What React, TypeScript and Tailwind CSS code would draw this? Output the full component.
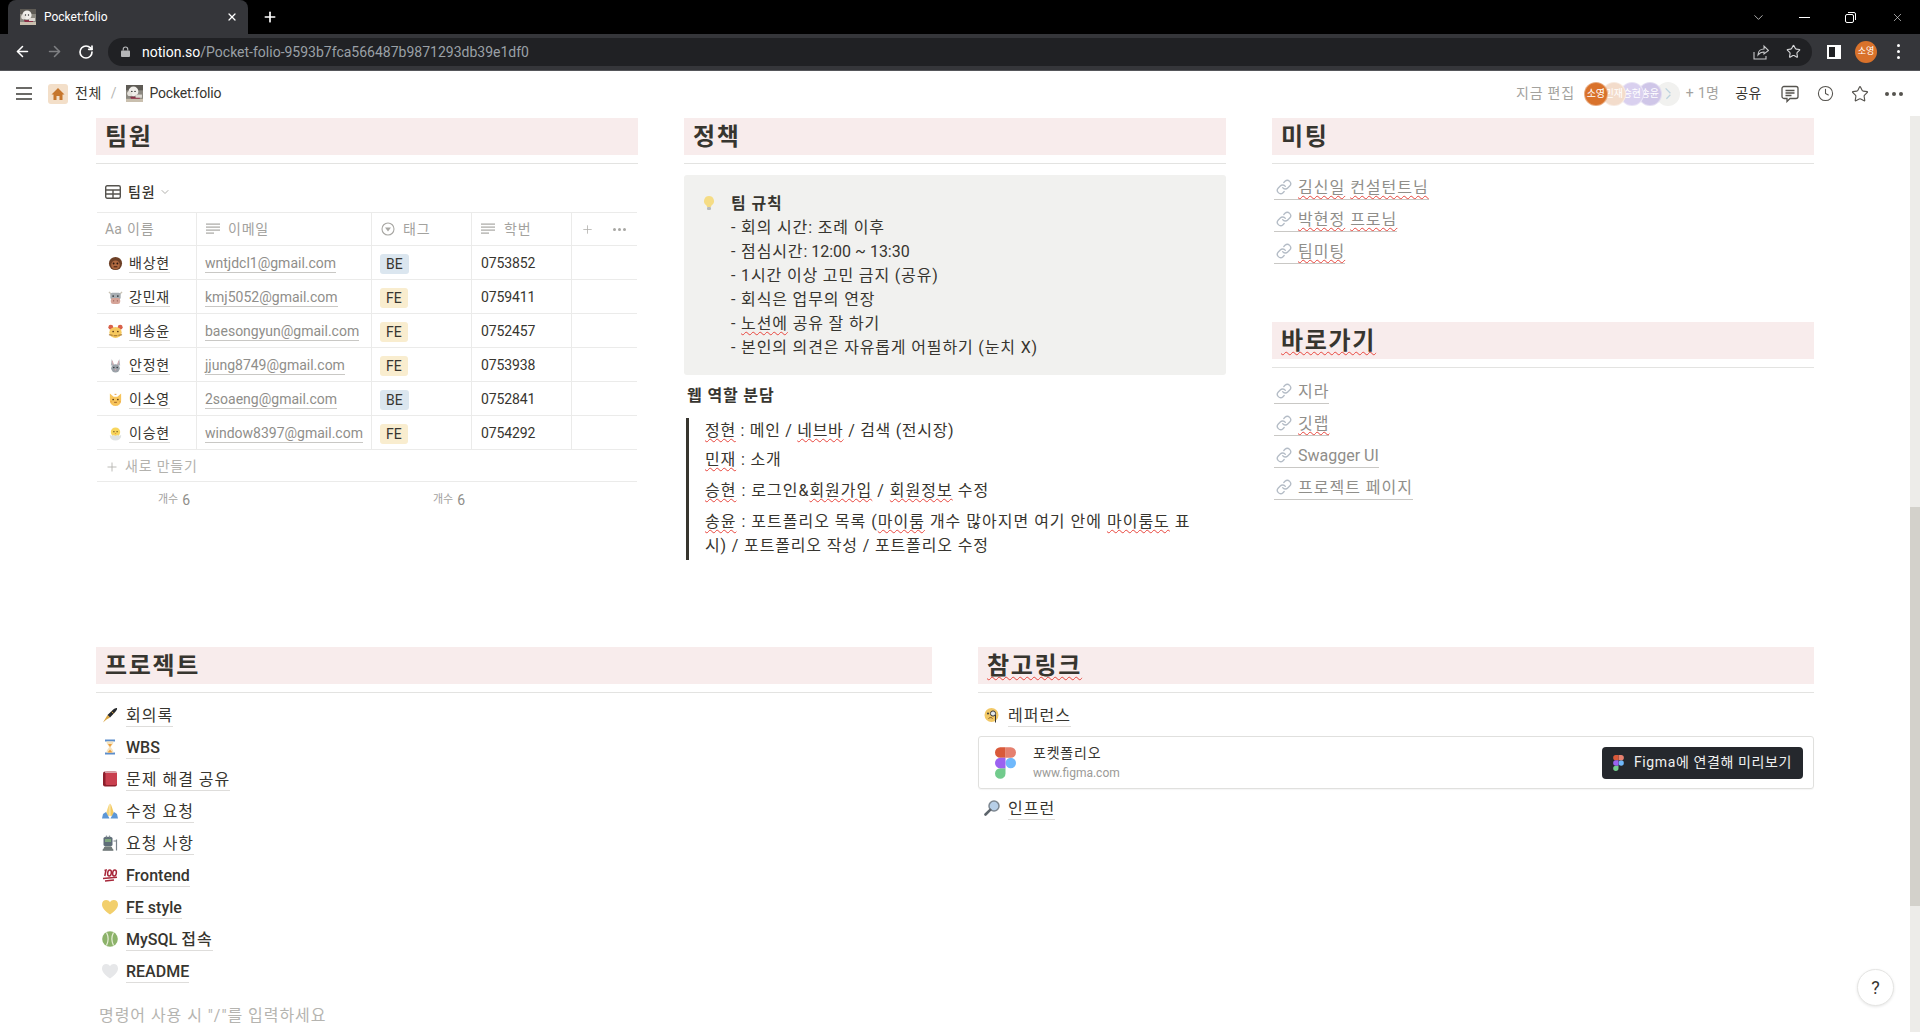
import React from "react";
import { ArrowLeft, ArrowRight, RotateCw, Star, Plus, X, ChevronDown, Link as LinkIcon, Clock } from "lucide-react";

type P = { className?: string };
const E = ({ children, className = "w-[16px] h-[16px]" }: { children: React.ReactNode; className?: string }) => (
  <svg viewBox="0 0 16 16" className={"shrink-0 " + className}>{children}</svg>
);

const Monkey = () => (
  <E className="w-[15px] h-[15px]">
    <circle cx="8" cy="8" r="7" fill="#6d4026" />
    <circle cx="8" cy="9.500" r="4.600" fill="#b0693f" />
    <circle cx="6" cy="8" r="1" fill="#2d1a10" /><circle cx="10" cy="8" r="1" fill="#2d1a10" />
    <path d="M6 11.500h4" stroke="#4a2515" strokeWidth="1.200" />
  </E>
);
const Cow = () => (
  <E className="w-[15px] h-[15px]">
    <path d="M1 2l3 3M15 2l-3 3" stroke="#c9c3b5" strokeWidth="1.500" />
    <rect x="2.500" y="3" width="11" height="7" rx="2" fill="#a7adb2" />
    <circle cx="5.500" cy="6.500" r=".9" fill="#33383c" /><circle cx="10.500" cy="6.500" r=".9" fill="#33383c" />
    <rect x="3" y="8.500" width="10" height="6.500" rx="2.600" fill="#d6a498" />
    <circle cx="6" cy="11.500" r=".7" fill="#8f5a50" /><circle cx="10" cy="11.500" r=".7" fill="#8f5a50" />
  </E>
);
const Hamster = () => (
  <E className="w-[15px] h-[15px]">
    <circle cx="3" cy="3.500" r="2.600" fill="#d9614a" /><circle cx="13" cy="3.500" r="2.600" fill="#d9614a" />
    <ellipse cx="8" cy="9" rx="6.600" ry="5.800" fill="#f6c95f" />
    <circle cx="5.500" cy="8" r=".9" fill="#5a3a15" /><circle cx="10.500" cy="8" r=".9" fill="#5a3a15" />
    <path d="M1 11.500l4 .5M15 11.500l-4 .5M6 12.500h4" stroke="#9a6a2a" strokeWidth="1" />
  </E>
);
const Rabbit = () => (
  <E className="w-[15px] h-[15px]">
    <path d="M4 1l2.500 7L3 8zM12 1L9.500 8 13 8z" fill="#aeb3b9" />
    <path d="M4.500 3l1.300 4.500M11.500 3l-1.300 4.500" stroke="#d9a7ad" strokeWidth="1" />
    <ellipse cx="8" cy="11" rx="4.600" ry="4.400" fill="#9aa1a8" />
    <circle cx="6.200" cy="10" r=".8" fill="#2f3338" /><circle cx="9.800" cy="10" r=".8" fill="#2f3338" />
    <circle cx="8" cy="12.500" r=".8" fill="#d9a7ad" />
  </E>
);
const Cat = () => (
  <E className="w-[15px] h-[15px]">
    <path d="M2 1.500L6 5h4l4-3.500V9A6 6 0 0 1 2 9z" fill="#f7c45b" />
    <circle cx="5.500" cy="8" r=".9" fill="#5a3a15" /><circle cx="10.500" cy="8" r=".9" fill="#5a3a15" />
    <path d="M6.500 11h3" stroke="#a5692a" strokeWidth="1.100" />
    <path d="M7 2.500h2M2.500 10.500h1.500M12 10.500h1.500" stroke="#e4983c" strokeWidth="1" />
  </E>
);
const Chick = () => (
  <E className="w-[15px] h-[15px]">
    <circle cx="8" cy="6.500" r="5" fill="#f8d65e" />
    <circle cx="6.300" cy="6" r=".7" fill="#5a4212" /><circle cx="9.700" cy="6" r=".7" fill="#5a4212" />
    <path d="M7 7.500h2l-1 1.200z" fill="#e8933a" />
    <path d="M2 9.500l2 1 2-1 2 1 2-1 2 1 2-1V11a6 4.500 0 0 1-12 0z" fill="#dfe3e3" />
  </E>
);
const Bulb = () => (
  <E>
    <path d="M8 1a5 5 0 0 0-3 9c.7.6 1 1.300 1 2h4c0-.7.3-1.400 1-2A5 5 0 0 0 8 1z" fill="#f5dc85" />
    <rect x="6" y="12" width="4" height="3" rx="1" fill="#b8bcbf" />
  </E>
);
const Pen = () => (
  <E>
    <path d="M15 1c.4 1.200-.5 2.700-2 4.200L8 10.500 5.500 8 11 2.800C12.400 1.500 14 .7 15 1z" fill="#26282b" />
    <path d="M5.500 8L8 10.500 4.500 12.500 1 15.500 3.400 11.500z" fill="#d9a441" />
    <path d="M9.700 4.600l2 2" stroke="#d9a441" strokeWidth="1" />
  </E>
);
const Hourglass = () => (
  <E>
    <rect x="3" y="0.500" width="10" height="2" fill="#5c8ecb" />
    <rect x="3" y="13.500" width="10" height="2" fill="#5c8ecb" />
    <path d="M4.500 2.500h7c0 3-2.500 4-2.500 5.500s2.500 2.500 2.500 5.500h-7C4.500 10.500 7 9.500 7 8S4.500 5.500 4.500 2.500z" fill="#f6e3bd" />
    <path d="M6 5h4L8 8zM5.500 13.500L8 10.500l2.500 3z" fill="#ee9f3d" />
  </E>
);
const Book = () => (
  <E>
    <rect x="1" y="0.500" width="14" height="15" rx="2" fill="#8d1f2c" />
    <rect x="3.500" y="0.500" width="11.500" height="13.500" rx="1.500" fill="#c93f4e" />
    <rect x="3" y="0.500" width="12" height="1.200" fill="#e2cfd1" />
  </E>
);
const Pray = () => (
  <E>
    <path d="M7.700 0.500C6.500 2 5.500 6 4.500 9 3.800 11 5 13 7.700 13z" fill="#f7d77e" />
    <path d="M8.300 0.500C9.500 2 10.500 6 11.500 9c.7 2-.5 4-3.200 4z" fill="#f2c95f" />
    <path d="M0 15.500L1 11 4 9l3.500 6.500zM16 15.500L15 11 12 9l-3.500 6.500z" fill="#5d97d6" />
  </E>
);
const Train = () => (
  <E>
    <rect x="1.500" y="2" width="9" height="9" rx="1.500" fill="#5f6d78" />
    <rect x="3" y="4" width="6" height="3" fill="#7fa77f" />
    <circle cx="4.500" cy="1.500" r=".9" fill="#8a939b" /><circle cx="7.500" cy="1.500" r=".9" fill="#8a939b" />
    <path d="M11.500 6h3v2.500M14.500 4.500v11" stroke="#7a838a" strokeWidth="1.200" fill="none" />
    <path d="M3 11L0 15.500h12L9 11z" fill="#9aa39e" />
    <path d="M2 13h8M1 15h10" stroke="#4a5257" strokeWidth="1" />
  </E>
);
const Hundred = () => (
  <E>
    <g stroke="#a7283a" fill="none" strokeWidth="1.500">
      <path d="M2.500 3.500L4 3 2.800 9" />
      <ellipse cx="7.500" cy="6" rx="1.800" ry="3" transform="rotate(10 7.500 6)" />
      <ellipse cx="12.500" cy="6" rx="1.800" ry="3" transform="rotate(10 12.500 6)" />
      <path d="M1 11.500l14-1.300M3 14l9-1" />
    </g>
  </E>
);
const Heart = ({ c }: { c: string }) => (
  <E>
    <path d="M8 15.500C3 12 0 9 0 5.200 0 2.600 2 1 4.200 1 5.800 1 7.200 1.900 8 3.200 8.800 1.900 10.200 1 11.800 1 14 1 16 2.600 16 5.200 16 9 13 12 8 15.500z" fill={c} />
  </E>
);
const Ball = () => (
  <E>
    <circle cx="8" cy="8" r="7.800" fill="#8cb26a" />
    <path d="M4.500 1.500c2 4 2 9 0 13M11.500 1.500c-2 4-2 9 0 13" stroke="#e9efd9" strokeWidth="1.200" fill="none" />
  </E>
);
const Monocle = () => (
  <E>
    <circle cx="7.500" cy="8" r="7" fill="#f2c866" />
    <circle cx="9" cy="6.500" r="2.600" fill="#e2e8ec" stroke="#3b3b3b" strokeWidth="1" />
    <circle cx="4" cy="6.500" r="1" fill="#3b3b3b" />
    <path d="M4.500 11.500c1.500-1.200 3-1.200 4 0" stroke="#7a4f1a" strokeWidth="1" fill="none" />
    <path d="M11.500 8v7.500" stroke="#333" strokeWidth="1" />
  </E>
);
const Magnifier = () => (
  <E>
    <circle cx="10" cy="6" r="5" fill="#b7cfe8" stroke="#7d8791" strokeWidth="1.500" />
    <path d="M6.200 9.800L1.500 14.500" stroke="#5c646b" strokeWidth="2.600" strokeLinecap="round" />
  </E>
);
const Dog = ({ className }: P) => (
  <svg viewBox="0 0 16 16" className={className}>
    <rect width="16" height="16" rx="1.500" fill="#8b8880" />
    <rect y="0" width="16" height="5" fill="#5e5b55" />
    <circle cx="7" cy="6" r="4.600" fill="#f0eeea" />
    <circle cx="3.500" cy="8" r="2.400" fill="#e4e1db" />
    <circle cx="5.500" cy="6" r=".7" fill="#222" /><circle cx="8.500" cy="6" r=".7" fill="#222" />
    <path d="M4 11h9v3H5z" fill="#8b2f46" />
    <path d="M0 13h16v3H0z" fill="#c9bfae" />
    <path d="M9 9h6v3H9z" fill="#dcd8d2" />
  </svg>
);
const Figma = ({ className }: P) => (
  <svg viewBox="0 0 38 57" className={className}>
    <path d="M19 28.500a9.500 9.500 0 1 1 19 0 9.500 9.500 0 0 1-19 0z" fill="#6fb8fb" />
    <path d="M0 47.500A9.500 9.500 0 0 1 9.500 38H19v9.500a9.500 9.500 0 1 1-19 0z" fill="#72cb8d" />
    <path d="M19 0v19h9.500a9.500 9.500 0 1 0 0-19H19z" fill="#e5806f" />
    <path d="M0 9.500A9.500 9.500 0 0 0 9.500 19H19V0H9.500A9.500 9.500 0 0 0 0 9.500z" fill="#d9593a" />
    <path d="M0 28.500A9.500 9.500 0 0 0 9.500 38H19V19H9.500A9.500 9.500 0 0 0 0 28.500z" fill="#9b62f0" />
  </svg>
);
const Lines = () => (
  <svg viewBox="0 0 14 14" className="w-[14px] h-[14px] shrink-0" fill="#a8a7a3">
    <rect x="0" y="1.500" width="14" height="1.200" /><rect x="0" y="4.500" width="14" height="1.200" />
    <rect x="0" y="7.500" width="14" height="1.200" /><rect x="0" y="10.500" width="8" height="1.200" />
  </svg>
);

const W = ({ children }: { children: React.ReactNode }) => (
  <span className="underline decoration-wavy decoration-[#e8453c] decoration-1 underline-offset-2 [text-decoration-skip-ink:none]">{children}</span>
);
const L = ({ children }: { children: React.ReactNode }) => <span className="tracking-normal">{children}</span>;

const Heading = ({ children }: { children: React.ReactNode }) => (
  <div>
    <div className="h-[37px] pt-[2px] bg-[#f8ecec] pl-[9px] flex items-center text-[24px] leading-[35px] font-bold text-[#37352f] tracking-[1.7px]">{children}</div>
    <div className="mt-[8px] h-px bg-[#e3e3e1]" />
  </div>
);

const members = [
  { icon: <Monkey />, name: "배상현", email: "wntjdcl1@gmail.com", tag: "BE", no: "0753852" },
  { icon: <Cow />, name: "강민재", email: "kmj5052@gmail.com", tag: "FE", no: "0759411" },
  { icon: <Hamster />, name: "배송윤", email: "baesongyun@gmail.com", tag: "FE", no: "0752457" },
  { icon: <Rabbit />, name: "안정현", email: "jjung8749@gmail.com", tag: "FE", no: "0753938" },
  { icon: <Cat />, name: "이소영", email: "2soaeng@gmail.com", tag: "BE", no: "0752841" },
  { icon: <Chick />, name: "이승현", email: "window8397@gmail.com", tag: "FE", no: "0754292" },
];

const Members = () => (
  <div className="ml-px w-[540px] text-[14px]">
    <div className="mt-[12px] h-[32px] flex items-center pl-[8px] text-[#37352f] font-medium">
      <svg viewBox="0 0 16 14" className="w-[16px] h-[14px]" fill="none" stroke="#55534e" strokeWidth="1.400">
        <rect x=".7" y=".7" width="14.600" height="12.600" rx="1.500" /><path d="M.7 5h14.600M.7 9h14.600M8 5v8.300" />
      </svg>
      <span className="ml-[7px] tracking-[0.8px]">팀원</span>
      <ChevronDown className="ml-[4px] w-[12px] h-[12px] text-[#b1b0ac]" />
    </div>
    <div className="mt-[4px] border-t border-[#ebebea] h-[34px] border-b grid grid-cols-[100px_175px_100px_100px_65px] text-[#a3a29e]">
      <div className="border-r border-[#ebebea] flex items-center pl-[8px]">
        <span className="text-[14px] w-[22px]">Aa</span><span className="tracking-[0.8px]">이름</span>
      </div>
      <div className="border-r border-[#ebebea] flex items-center pl-[9px]"><Lines /><span className="ml-[8px] tracking-[0.8px]">이메일</span></div>
      <div className="border-r border-[#ebebea] flex items-center pl-[9px]">
        <svg viewBox="0 0 14 14" className="w-[14px] h-[14px]" fill="none" stroke="#a8a7a3" strokeWidth="1.100"><circle cx="7" cy="7" r="6" /><path d="M4 5.500h6L7 9.500z" fill="#a8a7a3" stroke="none" /></svg>
        <span className="ml-[8px] tracking-[0.8px]">태그</span>
      </div>
      <div className="border-r border-[#ebebea] flex items-center pl-[9px]"><Lines /><span className="ml-[9px] tracking-[0.8px]">학번</span></div>
      <div className="flex items-center pl-[9px] text-[#b3b2ae]">
        <Plus className="w-[13px] h-[13px]" strokeWidth={1.500} />
        <span className="ml-[19px] flex gap-[2px]"><i className="w-[3px] h-[3px] rounded-full bg-[#a8a7a3]" /><i className="w-[3px] h-[3px] rounded-full bg-[#a8a7a3]" /><i className="w-[3px] h-[3px] rounded-full bg-[#a8a7a3]" /></span>
      </div>
    </div>
    {members.map((m) => (
      <div key={m.name} className="h-[34px] border-b border-[#ebebea] grid grid-cols-[100px_175px_100px_100px_65px] text-[#37352f]">
        <div className="border-r border-[#ebebea] flex items-center pl-[11px] pt-[2px]">
          {m.icon}
          <span className="ml-[6px] leading-[18px] border-b border-[#d9d8d5] tracking-[0.8px]">{m.name}</span>
        </div>
        <div className="border-r border-[#ebebea] flex items-center pl-[8px] pt-[2px] overflow-hidden">
          <span className="text-[#8f8e8a] leading-[18px] border-b border-[#c9c8c5] whitespace-nowrap">{m.email}</span>
        </div>
        <div className="border-r border-[#ebebea] flex items-center pl-[8px] pt-[2px]">
          <span className={m.tag === "BE" ? "h-[20px] px-[6px] rounded-[3px] bg-[#dbe6ef] leading-[20px]" : "h-[20px] px-[6px] rounded-[3px] bg-[#f9edcf] leading-[20px]"}>{m.tag}</span>
        </div>
        <div className="border-r border-[#ebebea] flex items-center pl-[9px] pt-[2px] -tracking-[0.1px]">{m.no}</div>
        <div />
      </div>
    ))}
    <div className="h-[32px] pt-[2px] border-b border-[#ebebea] flex items-center pl-[8px] text-[#b3b2ae]">
      <Plus className="w-[14px] h-[14px]" strokeWidth={1.500} />
      <span className="ml-[6px] tracking-[0.8px]">새로 만들기</span>
    </div>
    <div className="h-[36px] grid grid-cols-[100px_175px_100px_100px_65px] text-[#a3a29e]">
      <div className="flex items-center justify-end pr-[7px]"><span className="text-[11px] mr-[4px]">개수</span><span className="text-[14px] text-[#8f8e8a]">6</span></div>
      <div />
      <div className="flex items-center justify-end pr-[7px]"><span className="text-[11px] mr-[4px]">개수</span><span className="text-[14px] text-[#8f8e8a]">6</span></div>
    </div>
  </div>
);

const Policy = () => (
  <div className="text-[16px] leading-[24px] text-[#37352f] tracking-[0.85px]">
    <div className="mt-[11px] h-[200px] rounded-[3px] bg-[#f1f1ef] pt-[17px] pl-[17px] flex">
      <div className="w-[30px] pt-[3px] shrink-0"><Bulb /></div>
      <div>
        <div className="font-bold">팀 규칙</div>
        <div>- 회의 시간: 조례 이후</div>
        <div>- 점심시간<L>: 12:00 ~ 13:30</L></div>
        <div>- 1시간 이상 고민 금지 (공유)</div>
        <div>- 회식은 업무의 연장</div>
        <div>- <W>노션에</W> 공유 잘 하기</div>
        <div>- 본인의 의견은 자유롭게 어필하기 (눈치 X)</div>
      </div>
    </div>
    <div className="mt-[8px] pt-px pl-[3px] font-bold">웹 역할 분담</div>
    <div className="mt-[10px] ml-[2px] h-[142px] pt-px border-l-[3px] border-[#37352f] pl-[16px]">
      <div className="tracking-[0.7px]"><W>정현</W> : 메인 / <W>네브바</W> / 검색 (전시장)</div>
      <div className="mt-[5px]"><W>민재</W> : 소개</div>
      <div className="mt-[7px] tracking-[1px]"><W>승현</W> : 로그인&amp;<W>회원가입</W> / <W>회원정보</W> 수정</div>
      <div className="mt-[7px] tracking-[1px]"><W>송윤</W> : 포트폴리오 목록 (<W>마이룸</W> 개수 많아지면 여기 안에 <W>마이룸도</W> 표<br /><span className="tracking-[0.85px]">시) / 포트폴리오 작성 / 포트폴리오 수정</span></div>
    </div>
  </div>
);

const Ext = ({ children }: { children: React.ReactNode }) => (
  <div className="h-[32px] flex items-center pl-[2px] text-[16px] text-[#8f8e8a] tracking-[1px]">
    <span className="flex items-center h-[26px] border-b border-[#c9c8c5] pl-[2px]">
      <LinkIcon className="w-[16px] h-[16px] text-[#b4bcc6]" strokeWidth={2} />
      <span className="ml-[6px] pt-px leading-[21px]">{children}</span>
    </span>
  </div>
);

const Page = ({ icon, children, strong }: { icon: React.ReactNode; children: React.ReactNode; strong?: boolean }) => (
  <div className="h-[32px] flex items-center pl-[6px] text-[16px] text-[#37352f] tracking-[1px]">
    {icon}
    <span className={strong ? "ml-[8px] pt-px leading-[21px] border-b border-[#dedddb] font-medium" : "ml-[8px] pt-px leading-[21px] border-b border-[#dedddb]"}>{children}</span>
  </div>
);

const Dot = ({ c, z, children }: { c: string; z: string; children?: React.ReactNode }) => (
  <span className={"w-[24px] h-[24px] rounded-full -mr-[6px] flex items-center justify-center overflow-hidden text-[10px] text-white whitespace-nowrap border border-white/40 " + z} style={{ backgroundColor: c }}>{children}</span>
);

export default function App() {
  return (
    <div className="w-[1920px] h-[1032px] overflow-hidden flex flex-col bg-white font-['Roboto','Noto_Sans_CJK_KR',sans-serif]">
      {/* Browser tab strip */}
      <div className="h-[34px] bg-black flex items-stretch text-white">
        <div className="ml-[8px] w-[240px] rounded-t-[8px] bg-[#35363a] flex items-center pl-[12px] pr-[10px]">
          <Dog className="w-[16px] h-[16px]" />
          <span className="ml-[8px] text-[12px] flex-1">Pocket:folio</span>
          <X className="w-[12px] h-[12px]" strokeWidth={2.500} />
        </div>
        <div className="ml-[14px] flex items-center"><Plus className="w-[16px] h-[16px]" strokeWidth={2.500} /></div>
        <div className="ml-auto flex items-center text-[#e6e6e6]">
          <ChevronDown className="w-[15px] h-[15px] mr-[33px]" strokeWidth={1.200} />
          <div className="w-[11px] h-px bg-white mr-[35px]" />
          <svg viewBox="0 0 11 11" className="w-[11px] h-[11px] mr-[35px]" fill="none" stroke="#fff" strokeWidth="1"><rect x=".5" y="2.500" width="8" height="8" rx="1.500" /><path d="M3 .5h6a1.500 1.500 0 0 1 1.500 1.500v6" /></svg>
          <X className="w-[13px] h-[13px] mr-[16px]" strokeWidth={1.200} />
        </div>
      </div>
      {/* Browser toolbar */}
      <div className="h-[37px] pb-px bg-[#35363a] border-b border-[#55565a] flex items-center text-white">
        <ArrowLeft className="ml-[14px] w-[17px] h-[17px]" strokeWidth={2.200} />
        <ArrowRight className="ml-[15px] w-[17px] h-[17px] text-[#7f8083]" strokeWidth={2.200} />
        <RotateCw className="ml-[15px] w-[16px] h-[16px]" strokeWidth={2.500} />
        <div className="ml-[14px] w-[1704px] h-[28px] rounded-full bg-[#202124] flex items-center pl-[13px]">
          <svg viewBox="0 0 10 12" className="w-[9px] h-[11px]" fill="#b5b6b8"><rect y="5" width="10" height="7" rx="1" /><path d="M2.500 5V3.500a2.500 2.500 0 0 1 5 0V5" fill="none" stroke="#b5b6b8" strokeWidth="1.300" /></svg>
          <span className="ml-[12px] pt-px text-[14px] text-white">notion.so<span className="text-[#9aa0a6]">/Pocket-folio-9593b7fca566487b9871293db39e1df0</span></span>
          <div className="ml-auto flex items-center mr-[11px]">
            <svg viewBox="0 0 16 16" className="w-[16px] h-[16px] mr-[17px]" fill="none" stroke="#c8c9cb" strokeWidth="1.100"><path d="M1 8v7h12v-3" /><path d="M5 11c0-4 3-6 6-6V2l4.500 4.500L11 10V8c-2.500 0-4.500 1-6 3z" /></svg>
            <Star className="w-[15px] h-[15px] text-[#d5d6d8]" strokeWidth={1.800} />
          </div>
        </div>
        <div className="ml-[15px] w-[14px] h-[14px] border-[2px] border-white border-r-[6px] bg-[#202124]" />
        <div className="ml-[14px] w-[22px] h-[22px] rounded-full bg-[#d9722b] text-[9px] flex items-center justify-center">소영</div>
        <div className="ml-[20px] flex flex-col gap-[3px]"><i className="w-[3px] h-[3px] rounded-full bg-white" /><i className="w-[3px] h-[3px] rounded-full bg-white" /><i className="w-[3px] h-[3px] rounded-full bg-white" /></div>
      </div>
      {/* Notion top bar */}
      <div className="h-[45px] flex items-center text-[14px] text-[#37352f]">
        <div className="ml-[16px] w-[16px] flex flex-col gap-[3.500px]"><i className="h-[2px] bg-[#6b6a67]" /><i className="h-[2px] bg-[#6b6a67]" /><i className="h-[2px] bg-[#6b6a67]" /></div>
        <div className="ml-[16px] w-[20px] h-[20px] rounded-[3px] bg-[#f3dfc9] flex items-center justify-center">
          <svg viewBox="0 0 14 14" className="w-[14px] h-[14px]" fill="#c6762c"><path d="M7 1L0.500 7.500H2.500V13H5.500V9H8.500V13H11.500V7.500H13.500z" /></svg>
        </div>
        <span className="ml-[7px] tracking-[0.5px]">전체</span>
        <span className="ml-[9px] text-[#b8b7b4]">/</span>
        <Dog className="ml-[9px] w-[17px] h-[17px]" />
        <span className="ml-[7px] -tracking-[0.2px]">Pocket:folio</span>
        <div className="ml-auto flex items-center">
          <span className="text-[#a3a29e] tracking-[0.75px]">지금 편집</span>
          <div className="ml-[9px] flex items-center">
            <Dot c="#d9722b" z="z-40">소영</Dot>
            <Dot c="#f3dccb" z="z-30">민재</Dot>
            <Dot c="#d9d0ef" z="z-20">승현</Dot>
            <Dot c="#cfc6e8" z="z-10">송윤</Dot>
            <span className="w-[24px] h-[24px] rounded-full bg-[#f1f1ef] flex items-center justify-center">
              <svg viewBox="0 0 10 16" className="w-[8px] h-[14px]" fill="none" stroke="#bcd3de" strokeWidth="1.600"><path d="M2 1l6 6M8 9l-5 5" /></svg>
            </span>
          </div>
          <span className="ml-[6px] text-[#a3a29e] tracking-[0.3px]">+ 1명</span>
          <span className="ml-[16px] tracking-[0.5px]">공유</span>
          <svg viewBox="0 0 18 18" className="ml-[19px] w-[18px] h-[18px]" fill="none" stroke="#55534e" strokeWidth="1.300"><path d="M3 1.500h12a2 2 0 0 1 2 2v8a2 2 0 0 1-2 2H9l-3 3v-3H3a2 2 0 0 1-2-2v-8a2 2 0 0 1 2-2z" /><path d="M4.500 5.500h9M4.500 8h9M4.500 10.500h6" /></svg>
          <Clock className="ml-[18px] w-[17px] h-[17px] text-[#55534e]" strokeWidth={1.500} />
          <Star className="ml-[17px] w-[18px] h-[18px] text-[#55534e]" strokeWidth={1.500} />
          <span className="ml-[16px] mr-[17px] flex gap-[3px]"><i className="w-[4px] h-[4px] rounded-full bg-[#55534e]" /><i className="w-[4px] h-[4px] rounded-full bg-[#55534e]" /><i className="w-[4px] h-[4px] rounded-full bg-[#55534e]" /></span>
        </div>
      </div>
      {/* Page body */}
      <div className="flex-1 flex min-h-0">
        <main className="relative flex-1 min-w-0 px-[96px] pt-[2px]">
          <div className="h-[529px] grid grid-cols-3 gap-x-[46px]">
            <section>
              <Heading>팀원</Heading>
              <Members />
            </section>
            <section>
              <Heading>정책</Heading>
              <Policy />
            </section>
            <section>
              <Heading>미팅</Heading>
              <div className="mt-[7px]">
                <Ext><W>김신일</W> <W>컨설턴트님</W></Ext>
                <Ext><W>박현정</W> <W>프로님</W></Ext>
                <Ext><W>팀미팅</W></Ext>
              </div>
              <div className="mt-[55px]">
                <Heading><W>바로가기</W></Heading>
              </div>
              <div className="mt-[7px]">
                <Ext>지라</Ext>
                <Ext><W>깃랩</W></Ext>
                <Ext><L>Swagger UI</L></Ext>
                <Ext>프로젝트 페이지</Ext>
              </div>
            </section>
          </div>
          <div className="grid grid-cols-2 gap-x-[46px]">
            <section>
              <Heading>프로젝트</Heading>
              <div className="mt-[6px]">
                <Page icon={<Pen />}>회의록</Page>
                <Page icon={<Hourglass />} strong><L>WBS</L></Page>
                <Page icon={<Book />}>문제 해결 공유</Page>
                <Page icon={<Pray />}>수정 요청</Page>
                <Page icon={<Train />}>요청 사항</Page>
                <Page icon={<Hundred />} strong><L>Frontend</L></Page>
                <Page icon={<Heart c="#f2cf6c" />} strong><L>FE style</L></Page>
                <Page icon={<Ball />} strong><L>MySQL </L>접속</Page>
                <Page icon={<Heart c="#e6e7e9" />} strong><L>README</L></Page>
              </div>
              <div className="mt-[17px] pl-[3px] text-[16px] leading-[24px] text-[#b5b4b0] tracking-[0.95px]">명령어 사용 시 "/"를 입력하세요</div>
            </section>
            <section>
              <Heading><W>참고링크</W></Heading>
              <div className="mt-[6px]">
                <Page icon={<Monocle />}>레퍼런스</Page>
                <div className="mt-[5px] h-[53px] rounded-[3px] border border-[#e0e0de] flex items-center pl-[16px] pr-[10px] shadow-[0_1px_1px_rgba(0,0,0,0.04)]">
                  <Figma className="w-[21px] h-[32px]" />
                  <div className="ml-[17px] flex-1">
                    <div className="text-[14px] leading-[20px] text-[#37352f] tracking-[0.8px]">포켓폴리오</div>
                    <div className="mt-[1px] text-[12px] leading-[18px] text-[#9b9a97]">www.figma.com</div>
                  </div>
                  <div className="w-[201px] h-[32px] rounded-[4px] bg-[#25282d] flex items-center pl-[11px] text-[14px] text-[#f0f0f0]">
                    <Figma className="w-[11px] h-[16px]" />
                    <span className="ml-[10px] tracking-[0.6px]">Figma에 연결해 미리보기</span>
                  </div>
                </div>
                <div className="mt-[3px]"><Page icon={<Magnifier />}>인프런</Page></div>
              </div>
            </section>
          </div>
          <div className="absolute right-[16px] bottom-[26px] w-[37px] h-[37px] rounded-full bg-white border border-[#e5e5e3] shadow-[0_1px_3px_rgba(0,0,0,0.1)] flex items-center justify-center text-[18px] text-[#37352f]">?</div>
        </main>
        <div className="w-[10px] bg-[#edece9] flex flex-col">
          <div className="h-[391px]" />
          <div className="h-[399px] bg-[#d3d1cb]" />
        </div>
      </div>
    </div>
  );
}
